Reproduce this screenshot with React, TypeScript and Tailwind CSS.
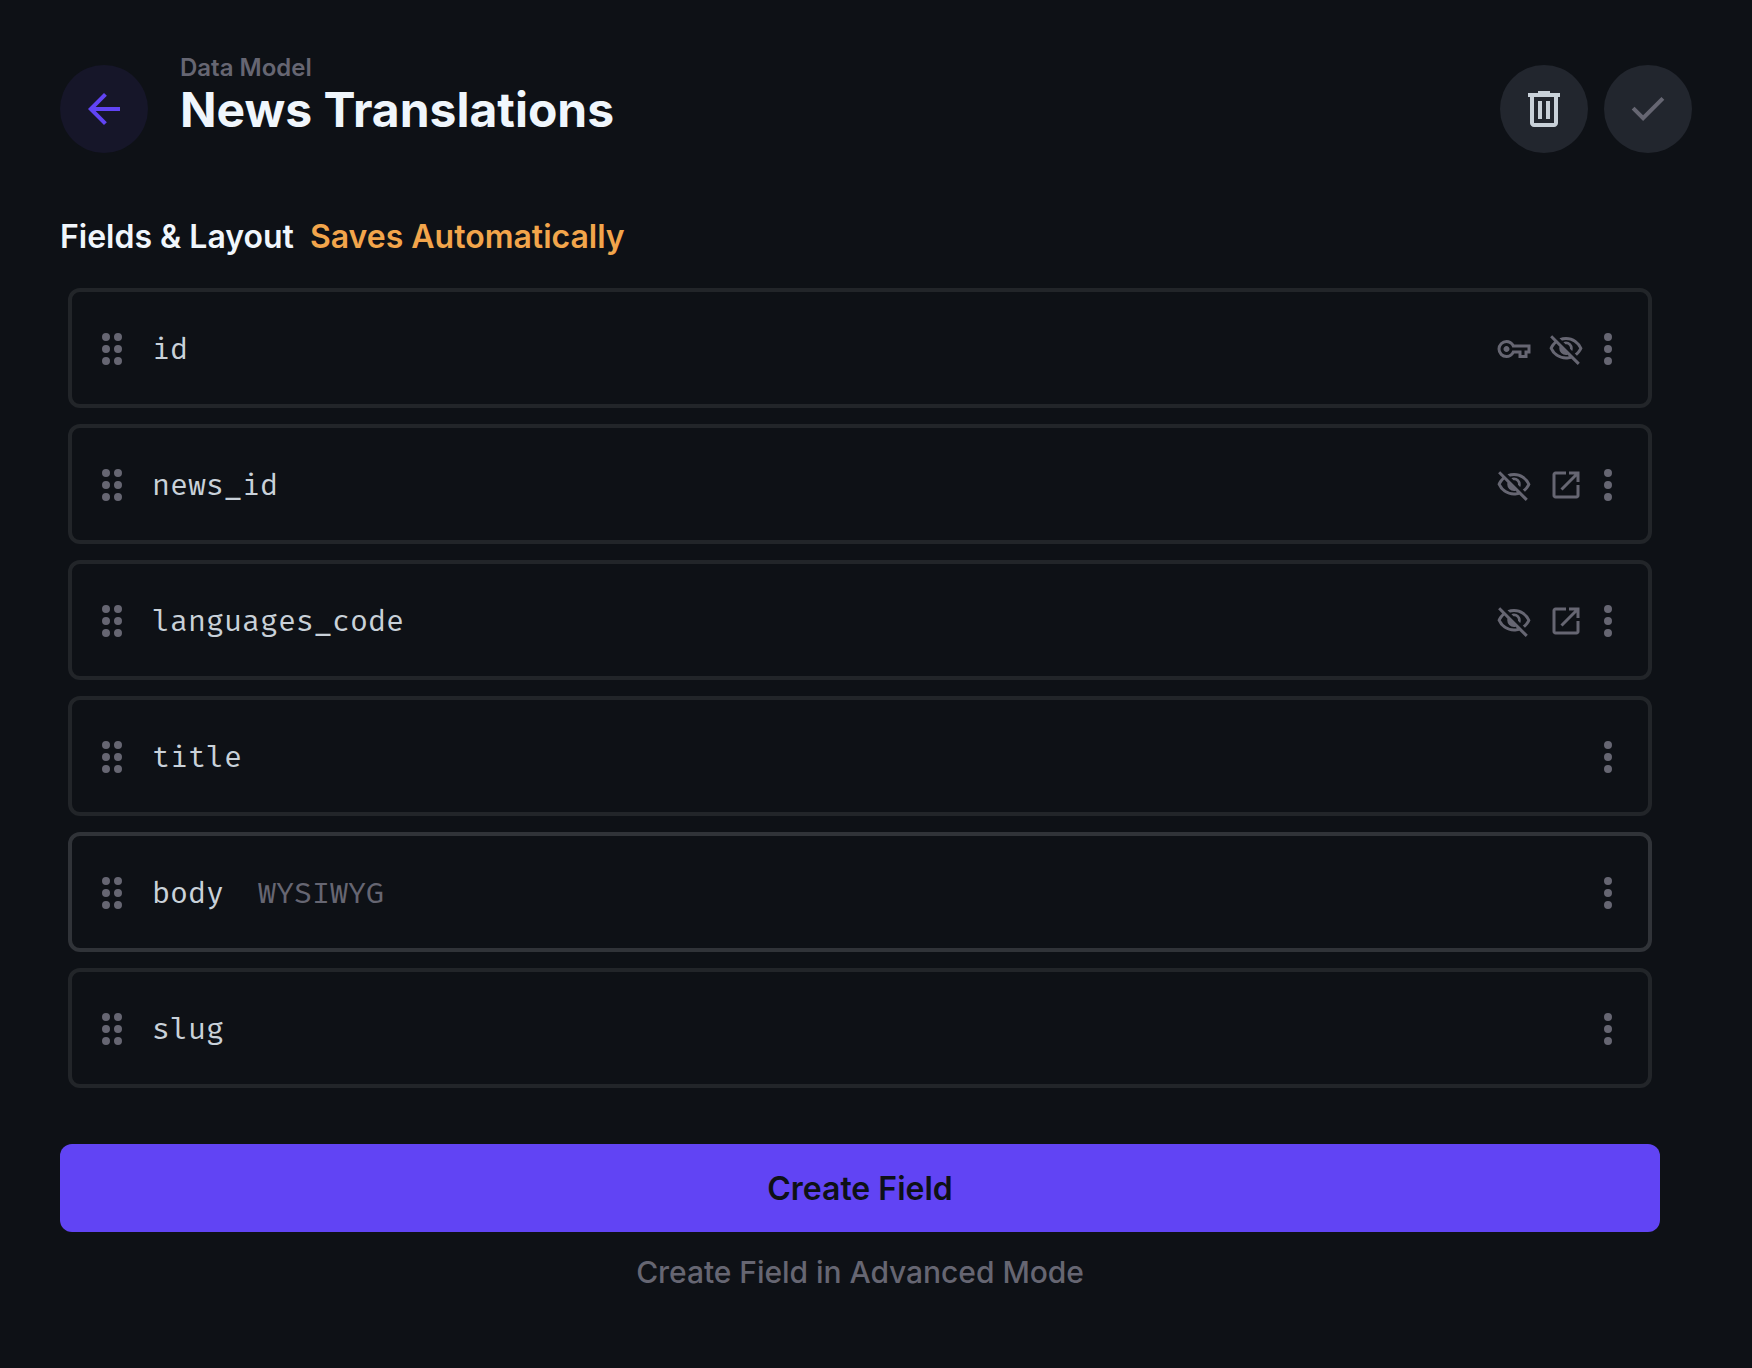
type IconName = "back" | "trash" | "check" | "key" | "hidden" | "open" | "more" | "drag";

const PATHS: Record<IconName, string> = {
  back: "m12 20-8-8 8-8 1.425 1.4L7.825 11H20v2H7.825l5.6 5.6Z",
  trash:
    "M7 21q-.825 0-1.412-.587Q5 19.825 5 19V6H4V4h5V3h6v1h5v2h-1v13q0 .825-.587 1.413Q17.825 21 17 21ZM17 6H7v13h10ZM9 17h2V8H9Zm4 0h2V8h-2Z",
  check: "m9.55 18-5.7-5.7 1.425-1.425L9.55 15.15l9.175-9.175L20.15 7.4Z",
  key: "M7 18q-2.5 0-4.25-1.75T1 12q0-2.5 1.75-4.25T7 6q1.675 0 3.037.825Q11.4 7.65 12.2 9H23v6h-2v3h-6v-3h-2.8q-.8 1.35-2.163 2.175Q8.675 18 7 18Zm0-2q1.65 0 2.65-1.012 1-1.013 1.2-1.988H17v3h2v-3h2v-2H10.85q-.2-.975-1.2-1.988Q8.65 8 7 8 5.35 8 4.175 9.175 3 10.35 3 12q0 1.65 1.175 2.825Q5.35 16 7 16Zm0-2q.825 0 1.412-.588Q9 12.825 9 12t-.588-1.413Q7.825 10 7 10t-1.412.587Q5 11.175 5 12q0 .825.588 1.412Q6.175 14 7 14Z",
  hidden:
    "m16.1 13.3-1.45-1.45q.225-1.175-.675-2.2-.9-1.025-2.325-.8L10.2 7.4q.425-.2.863-.3Q11.5 7 12 7q1.875 0 3.188 1.312Q16.5 9.625 16.5 11.5q0 .5-.1.938-.1.437-.3.862Zm3.2 3.15-1.45-1.4q.95-.725 1.688-1.588.737-.862 1.262-1.962-1.25-2.525-3.588-4.013Q14.875 6 12 6q-.725 0-1.425.1-.7.1-1.375.3L7.65 4.85q1.025-.425 2.1-.638Q10.825 4 12 4q3.775 0 6.725 2.087Q21.675 8.175 23 11.5q-.575 1.475-1.512 2.738Q20.55 15.5 19.3 16.45Zm.5 6.15-4.2-4.15q-.875.275-1.762.413Q12.95 19 12 19q-3.775 0-6.725-2.087Q2.325 14.825 1 11.5q.525-1.325 1.325-2.463Q3.125 7.9 4.15 7L1.4 4.2l1.4-1.4 18.4 18.4ZM5.55 8.4q-.725.65-1.325 1.425-.6.775-1.025 1.675 1.25 2.525 3.587 4.012Q9.125 17 12 17q.5 0 .975-.062.475-.063.975-.138l-.9-.95q-.275.075-.525.112Q12.275 16 12 16q-1.875 0-3.188-1.312Q7.5 13.375 7.5 11.5q0-.275.037-.525.038-.25.113-.525Z",
  open: "M5 21q-.825 0-1.413-.587Q3 19.825 3 19V5q0-.825.587-1.413Q4.175 3 5 3h7v2H5v14h14v-7h2v7q0 .825-.587 1.413Q19.825 21 19 21Zm4.7-5.3-1.4-1.4L17.6 5H14V3h7v7h-2V6.4Z",
  more: "M12 4a2 2 0 1 1 0 4a2 2 0 1 1 0-4ZM12 10a2 2 0 1 1 0 4a2 2 0 1 1 0-4ZM12 16a2 2 0 1 1 0 4a2 2 0 1 1 0-4Z",
  drag: "M9 4a2 2 0 1 1 0 4a2 2 0 1 1 0-4ZM9 10a2 2 0 1 1 0 4a2 2 0 1 1 0-4ZM9 16a2 2 0 1 1 0 4a2 2 0 1 1 0-4ZM15 4a2 2 0 1 1 0 4a2 2 0 1 1 0-4ZM15 10a2 2 0 1 1 0 4a2 2 0 1 1 0-4ZM15 16a2 2 0 1 1 0 4a2 2 0 1 1 0-4Z",
};

function Icon({ name, className = "size-12" }: { name: IconName; className?: string }) {
  return (
    <svg viewBox="0 0 24 24" fill="currentColor" className={`shrink-0 ${className}`} aria-hidden="true">
      <path d={PATHS[name]} />
    </svg>
  );
}

interface Field {
  name: string;
  type?: string;
  icons?: IconName[];
  active?: boolean;
}

const FIELDS: Field[] = [
  { name: "id", icons: ["key", "hidden"] },
  { name: "news_id", icons: ["hidden", "open"] },
  { name: "languages_code", icons: ["hidden", "open"] },
  { name: "title" },
  { name: "body", type: "WYSIWYG", active: true },
  { name: "slug" },
];

function FieldRow({ name, type, icons = [], active }: Field) {
  return (
    <li
      className={`flex h-[120px] items-center rounded-xl border-4 px-4 pt-0.5 text-[#666672] ${
        active ? "border-[#303338]" : "border-[#222529]"
      }`}
    >
      <Icon name="drag" />
      <div className="ml-4 flex flex-1 gap-[34px] font-['Fira_Mono','DejaVu_Sans_Mono',monospace] text-[30px] leading-10">
        <span className="text-[#c9d1d9]">{name}</span>
        {type && <span>{type}</span>}
      </div>
      <div className="flex items-center gap-4">
        {icons.map((icon) => (
          <Icon key={icon} name={icon} className="size-9" />
        ))}
      </div>
      <Icon name="more" />
    </li>
  );
}

export default function App() {
  return (
    <main className="flex h-[1368px] w-[1752px] flex-col bg-[#0e1116] px-[60px] font-['Inter',sans-serif]">
      <header className="flex pt-[52px]">
        <button className="mt-[13px] flex size-[88px] items-center justify-center rounded-full bg-[#161629] text-[#6144f4]">
          <Icon name="back" />
        </button>
        <div className="ml-8 flex-1">
          <div className="text-2xl leading-8 font-semibold text-[#666672]">Data Model</div>
          <h1 className="text-5xl leading-[51px] font-bold text-[#f0f6fc]">News Translations</h1>
        </div>
        <div className="mt-[13px] flex gap-4">
          <button className="flex size-[88px] items-center justify-center rounded-full bg-[#22262e] text-[#c9d1d9]">
            <Icon name="trash" />
          </button>
          <button className="flex size-[88px] items-center justify-center rounded-full bg-[#22262e] text-[#666672]">
            <Icon name="check" />
          </button>
        </div>
      </header>
      <h2 className="mt-16 flex gap-4 text-[32px] leading-10 font-semibold text-[#f0f6fc]">
        Fields &amp; Layout
        <span className="text-[#f2a54b]">Saves Automatically</span>
      </h2>
      <ul className="mt-[31px] mr-10 ml-2 flex flex-col gap-4">
        {FIELDS.map((field) => (
          <FieldRow key={field.name} {...field} />
        ))}
      </ul>
      <div className="mt-14 mr-8 flex flex-col">
        <button className="h-[88px] rounded-xl bg-[#6144f4] pt-0.5 text-[32px] font-semibold text-[#0e1116]">
          Create Field
        </button>
        <button className="mt-5 text-[30px] leading-10 font-medium tracking-[-0.05px] text-[#666672]">
          Create Field in Advanced Mode
        </button>
      </div>
    </main>
  );
}
